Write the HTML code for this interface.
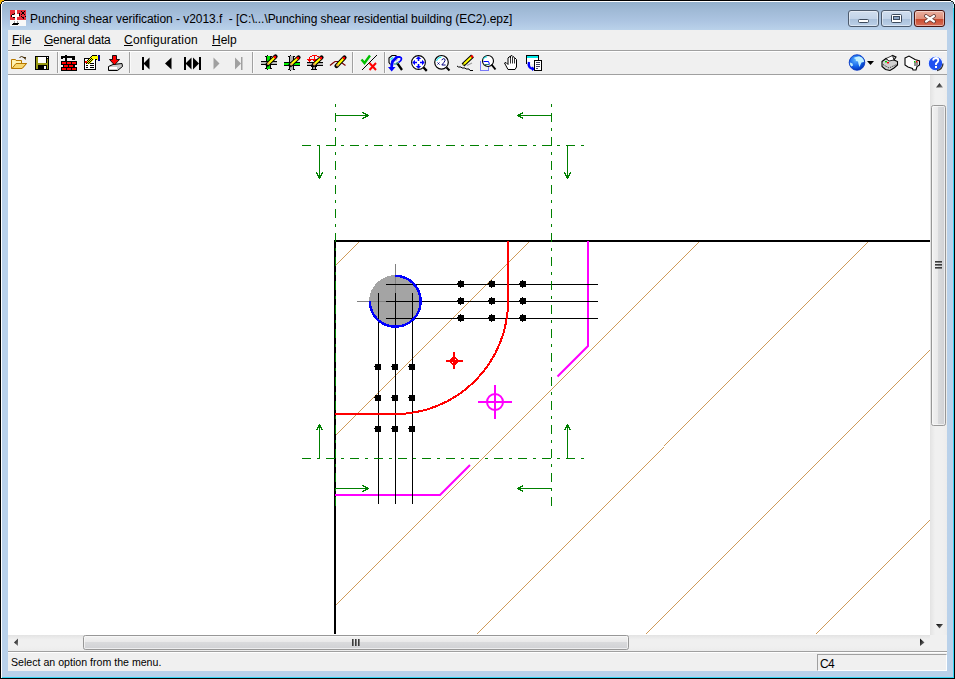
<!DOCTYPE html>
<html><head><meta charset="utf-8">
<style>
*{box-sizing:border-box}
html,body{margin:0;padding:0;width:955px;height:679px;overflow:hidden;background:#000;font-family:"Liberation Sans",sans-serif}
.a{position:absolute}
#win{position:absolute;left:0;top:0;width:955px;height:679px;background:#000}
#white{left:1px;top:1px;width:953px;height:677px;background:#fff}
#cyan{left:2px;top:2px;width:952px;height:676px;background:#33d4f4}
#frame{left:2px;top:2px;width:951px;height:675px;background:#b9d1ea}
#title{left:2px;top:2px;width:951px;height:28px;background:linear-gradient(#93b0cc,#a0bad6 30%,#adc5e2 70%,#bad2ea)}
#ttext{left:30px;top:10px;font-size:12px;color:#000;white-space:pre;letter-spacing:-0.05px;line-height:18px}
#client{left:8px;top:30px;width:939px;height:641px;background:#f0f0f0}
.menu{top:32px;font-size:12px;color:#000;white-space:pre;line-height:16px}
.menu u{text-decoration:underline;text-underline-offset:1px}
.hl{height:1px}
.btn{top:10px;height:17px;border:1px solid #4c5a6c;border-radius:3px;box-shadow:inset 0 0 0 1px rgba(255,255,255,0.45)}
.sep{width:1px;height:18px;top:54px;background:#a0a0a0}
</style></head><body>
<div id="win">
 <div id="white" class="a"></div>
 <div id="cyan" class="a"></div>
 <div id="frame" class="a"></div>
 <div id="title" class="a"></div>
 <div id="ttext" class="a">Punching shear verification - v2013.f  - [C:\...\Punching shear residential building (EC2).epz]</div>
 <!-- title buttons -->
 <div class="a btn" style="left:848px;width:31px;background:linear-gradient(#d0deee,#c3d4e8 50%,#a9c0da 52%,#bcd0e8)"></div>
 <div class="a btn" style="left:881px;width:31px;background:linear-gradient(#d0deee,#c3d4e8 50%,#a9c0da 52%,#bcd0e8)"></div>
 <div class="a btn" style="left:914px;width:31px;border-color:#4a1410;background:linear-gradient(#eab0a0,#e0907a 50%,#c8482c 52%,#d8705a)"></div>
<!--CORNERS-->
 <svg class="a" style="left:0;top:0" width="955" height="8" viewBox="0 0 955 8" shape-rendering="crispEdges">
  <rect x="0" y="0" width="4" height="1" fill="#f0b000"/><rect x="0" y="1" width="2" height="1" fill="#f0b000"/><rect x="0" y="2" width="1" height="2" fill="#f0b000"/>
  <rect x="2" y="1" width="2" height="1" fill="#202020"/><rect x="1" y="2" width="1" height="2" fill="#202020"/>
  <rect x="2" y="2" width="2" height="1" fill="#fff"/><rect x="2" y="3" width="1" height="1" fill="#fff"/>
  <rect x="951" y="0" width="4" height="1" fill="#fff"/><rect x="953" y="1" width="2" height="1" fill="#fff"/><rect x="954" y="2" width="1" height="2" fill="#fff"/>
  <rect x="951" y="1" width="2" height="1" fill="#203030"/><rect x="953" y="2" width="1" height="2" fill="#203030"/>
  <rect x="953" y="4" width="1" height="4" fill="#a0e8f8"/>
 </svg>
<!--/CORNERS-->
<!--TBTN-->
 <svg class="a" style="left:0;top:0" width="955" height="30" viewBox="0 0 955 30">
  <rect x="858.5" y="19.5" width="10" height="3" rx="1" fill="#fff" stroke="#3c4a5c" stroke-width="1"/>
  <rect x="891.5" y="14.5" width="10" height="8" rx="1" fill="#fff" stroke="#3c4a5c" stroke-width="1"/>
  <rect x="893.5" y="16.5" width="6" height="3" fill="#8aa4c4" stroke="#3c4a5c" stroke-width="1"/>
  <path d="M926 16 L934 21.5 M934 16 L926 21.5" stroke="#5a3430" stroke-width="3.8" stroke-linecap="round"/>
  <path d="M926 16 L934 21.5 M934 16 L926 21.5" stroke="#fff" stroke-width="2.2" stroke-linecap="round"/>
 </svg>
 <!-- app icon -->
 <svg class="a" style="left:10px;top:10px" width="16" height="16" viewBox="0 0 16 16" shape-rendering="crispEdges">
  <rect x="0" y="0" width="16" height="10" fill="#e8303c"/>
  <rect x="0" y="10" width="16" height="6" fill="#f8f8f8"/>
  <g fill="#000">
   <rect x="11" y="1" width="1" height="1"/><rect x="14" y="1" width="1" height="1"/><rect x="12" y="2" width="2" height="2"/>
   <rect x="11" y="4" width="1" height="1"/><rect x="14" y="4" width="1" height="1"/>
   <rect x="11" y="6" width="1" height="1"/><rect x="15" y="6" width="1" height="1"/><rect x="12" y="7" width="2" height="1"/><rect x="13" y="8" width="1" height="1"/>
   <rect x="1" y="5" width="1" height="2"/><rect x="2" y="4" width="2" height="1"/><rect x="4" y="3" width="1" height="1"/>
   <rect x="9" y="3" width="1" height="3"/><rect x="3" y="7" width="3" height="1"/><rect x="7" y="6" width="2" height="1"/>
   <rect x="3" y="13" width="5" height="2"/><rect x="2" y="14" width="2" height="1"/><rect x="8" y="13" width="1" height="1"/>
  </g>
  <g fill="#fff">
   <rect x="5" y="0" width="2" height="13"/><rect x="2" y="5" width="7" height="2"/><rect x="7" y="4" width="2" height="1"/>
  </g>
  <g fill="#a0a0a0"><rect x="4" y="11" width="1" height="2"/><rect x="7" y="11" width="1" height="2"/></g>
 </svg>
<!--/TBTN-->
 <div id="client" class="a"></div>
 <!-- menu -->
 <div class="a menu" style="left:12px"><u>F</u>ile</div>
 <div class="a menu" style="left:44px;letter-spacing:-0.25px"><u>G</u>eneral data</div>
 <div class="a menu" style="left:124px;letter-spacing:0.2px"><u>C</u>onfiguration</div>
 <div class="a menu" style="left:212px"><u>H</u>elp</div>
 <div class="a hl" style="left:8px;top:50px;width:939px;background:#a0a0a0"></div>
 <div class="a hl" style="left:8px;top:51px;width:939px;background:#fff"></div>
 <div class="a hl" style="left:8px;top:74px;width:939px;background:#a0a0a0"></div>
<!--TB-->
<svg class="a" style="left:8px;top:52px" width="939" height="22" viewBox="8 52 939 22">
<rect x="57" y="52" width="1" height="21" fill="#a0a0a0"/><rect x="58" y="52" width="1" height="21" fill="#fafafa"/>
<rect x="129" y="52" width="1" height="21" fill="#a0a0a0"/><rect x="130" y="52" width="1" height="21" fill="#fafafa"/>
<rect x="252" y="52" width="1" height="21" fill="#a0a0a0"/><rect x="253" y="52" width="1" height="21" fill="#fafafa"/>
<rect x="352" y="52" width="1" height="21" fill="#a0a0a0"/><rect x="353" y="52" width="1" height="21" fill="#fafafa"/>
<rect x="384" y="52" width="1" height="21" fill="#a0a0a0"/><rect x="385" y="52" width="1" height="21" fill="#fafafa"/>
<g>
<path d="M11.5 59.5 H15.5 L16 60.5 H21.5 V63.5 H26.5 L22 68.5 H11.5 Z" fill="#fff2b0" stroke="#b87800" stroke-width="1"/>
<path d="M16 63.5 H26.5 L22 68.5 H12 Z" fill="#f8d870" stroke="#b87800" stroke-width="1"/>
<path d="M19.5 57.5 Q21.5 55.5 24 57.5" fill="none" stroke="#402800" stroke-width="1"/><path d="M23 57 L26 57 L25.5 60 Z" fill="#402800"/>
</g>
<g shape-rendering="crispEdges"><rect x="35" y="56" width="14" height="14" fill="#000"/><rect x="36" y="57" width="2" height="12" fill="#9a9a14"/><rect x="47" y="59" width="1" height="10" fill="#9a9a14"/><rect x="36" y="63" width="12" height="2" fill="#9a9a14"/><rect x="38" y="57" width="8" height="6" fill="#fff"/><rect x="47" y="57" width="1" height="1" fill="#fff"/><rect x="38" y="65" width="9" height="4" fill="#000"/><rect x="44" y="66" width="2" height="3" fill="#fff"/></g>
<g shape-rendering="crispEdges"><rect x="61" y="56" width="14" height="2" fill="#000"/><rect x="61" y="58" width="2" height="1" fill="#000"/><rect x="65" y="55" width="2" height="6" fill="#000"/><rect x="72" y="58" width="3" height="2" fill="#000"/><rect x="73" y="57" width="1" height="2" fill="#000"/><rect x="61" y="61" width="16" height="4" fill="#000"/><rect x="63" y="64" width="12" height="4" fill="#000"/><rect x="61" y="67" width="16" height="4" fill="#000"/><rect x="62" y="62" width="4" height="2" fill="#ff0000"/><rect x="67" y="62" width="4" height="2" fill="#ff0000"/><rect x="72" y="62" width="4" height="2" fill="#ff0000"/><rect x="64" y="65" width="4" height="2" fill="#ff0000"/><rect x="69" y="65" width="4" height="2" fill="#ff0000"/><rect x="62" y="68" width="4" height="2" fill="#ff0000"/><rect x="67" y="68" width="4" height="2" fill="#ff0000"/><rect x="72" y="68" width="4" height="2" fill="#ff0000"/></g>
<g shape-rendering="crispEdges"><rect x="84" y="58" width="12" height="12" fill="#000"/><rect x="85" y="59" width="10" height="10" fill="#fff"/><rect x="86" y="63" width="2" height="1" fill="#000"/><rect x="86" y="65" width="2" height="1" fill="#000"/><rect x="86" y="67" width="2" height="1" fill="#000"/><rect x="90" y="63" width="4" height="1" fill="#000"/><rect x="90" y="65" width="4" height="1" fill="#000"/><rect x="90" y="67" width="4" height="1" fill="#000"/></g>
<g shape-rendering="crispEdges"><rect x="87" y="60" width="1" height="1" fill="#000"/><rect x="87" y="61" width="1" height="1" fill="#ffff00"/><rect x="87" y="62" width="1" height="1" fill="#000"/><rect x="87" y="63" width="1" height="1" fill="#ffff00"/><rect x="88" y="59" width="1" height="1" fill="#000"/><rect x="88" y="60" width="1" height="1" fill="#ffff00"/><rect x="88" y="61" width="1" height="1" fill="#000"/><rect x="88" y="62" width="1" height="1" fill="#ffff00"/><rect x="88" y="63" width="1" height="1" fill="#000"/><rect x="89" y="58" width="1" height="1" fill="#000"/><rect x="89" y="59" width="1" height="1" fill="#ffff00"/><rect x="89" y="60" width="1" height="1" fill="#000"/><rect x="89" y="61" width="1" height="1" fill="#ffff00"/><rect x="89" y="62" width="1" height="1" fill="#000"/><rect x="89" y="63" width="1" height="1" fill="#ffff00"/><rect x="90" y="57" width="1" height="1" fill="#000"/><rect x="90" y="58" width="1" height="1" fill="#ffff00"/><rect x="90" y="59" width="1" height="1" fill="#000"/><rect x="90" y="60" width="1" height="1" fill="#ffff00"/><rect x="90" y="61" width="1" height="1" fill="#000"/><rect x="90" y="62" width="1" height="1" fill="#ffff00"/><rect x="91" y="56" width="1" height="1" fill="#000"/><rect x="91" y="57" width="1" height="1" fill="#ffff00"/><rect x="91" y="58" width="1" height="1" fill="#000"/><rect x="91" y="59" width="1" height="1" fill="#ffff00"/><rect x="91" y="60" width="1" height="1" fill="#000"/><rect x="91" y="61" width="1" height="1" fill="#ffff00"/><rect x="92" y="56" width="1" height="1" fill="#ffff00"/><rect x="92" y="57" width="1" height="1" fill="#000"/><rect x="92" y="58" width="1" height="1" fill="#ffff00"/><rect x="92" y="59" width="1" height="1" fill="#000"/><rect x="92" y="60" width="1" height="1" fill="#ffff00"/><rect x="93" y="56" width="1" height="1" fill="#000"/><rect x="93" y="57" width="1" height="1" fill="#ffff00"/><rect x="93" y="58" width="1" height="1" fill="#000"/><rect x="93" y="59" width="1" height="1" fill="#ffff00"/><rect x="94" y="56" width="1" height="1" fill="#ffff00"/><rect x="94" y="57" width="1" height="1" fill="#000"/><rect x="94" y="58" width="1" height="1" fill="#ffff00"/><rect x="92" y="55" width="5" height="1" fill="#000"/><rect x="93" y="56" width="5" height="3" fill="#ffff00"/><rect x="92" y="57" width="1" height="1" fill="#ffff00"/><rect x="97" y="56" width="1" height="4" fill="#ffff00"/><rect x="95" y="59" width="2" height="1" fill="#000"/><rect x="98" y="55" width="2" height="6" fill="#000090"/><rect x="85" y="61" width="2" height="2" fill="#ff0000"/></g>
<path d="M108.5 66.5 L113 64.5 L122 63.5 L122.5 66.5 L117.5 70.5 H108.5 Z" fill="#c8c8c8" stroke="#000" stroke-width="1"/>
<rect x="109" y="67" width="8" height="2" fill="#fff"/>
<path d="M112.5 55.5 H116.5 V59.5 H119.5 L114.5 65 L109.5 59.5 H112.5 Z" fill="#ff0000" stroke="#000" stroke-width="0.9"/>
<g shape-rendering="crispEdges" fill="#000"><rect x="142" y="57" width="2" height="13" fill="#000"/></g>
<path d="M143.5 63.5 L149.5 57.5 V69.5 Z" fill="#000"/>
<path d="M165 63.5 L171.5 57.5 V69.5 Z" fill="#000"/>
<rect x="184" y="57" width="2" height="13" fill="#000"/><path d="M185.5 63.5 L191.5 57.5 V69.5 Z" fill="#000"/><path d="M199 63.5 L193 57.5 V69.5 Z" fill="#000"/><rect x="199" y="57" width="2" height="13" fill="#000"/>
<path d="M219.5 63.5 L213.5 57.5 V69.5 Z" fill="#a0a0a0"/>
<path d="M241 63.5 L235 57.5 V69.5 Z" fill="#a0a0a0"/><rect x="241" y="57" width="1.5" height="13" fill="#a0a0a0"/>
<g shape-rendering="crispEdges"><rect x="265" y="56" width="7" height="1" fill="#000"/><rect x="265" y="68" width="7" height="1" fill="#000"/><rect x="267" y="55" width="1" height="1" fill="#000"/><rect x="267" y="69" width="1" height="1" fill="#000"/><rect x="266" y="56" width="1" height="13" fill="#000"/><rect x="270" y="56" width="1" height="13" fill="#000"/><rect x="267" y="56" width="3" height="13" fill="#00e000"/><rect x="261" y="61" width="16" height="1" fill="#000"/><rect x="261" y="62" width="16" height="2" fill="#b8b8b8"/><rect x="261" y="64" width="16" height="1" fill="#000"/></g><line x1="267.5" y1="64.5" x2="275.5" y2="56.5" stroke="#000" stroke-width="4.2" stroke-linecap="round"/><line x1="268.5" y1="63.5" x2="274.5" y2="57.5" stroke="#ffff00" stroke-width="2.2"/><circle cx="274.9" cy="57.1" r="1.4" fill="#ff0000"/><circle cx="268.3" cy="63.7" r="1.2" fill="#f0b050"/>
<g shape-rendering="crispEdges"><rect x="288" y="56" width="7" height="1" fill="#000"/><rect x="288" y="69" width="7" height="1" fill="#000"/><rect x="290" y="55" width="1" height="1" fill="#000"/><rect x="290" y="70" width="1" height="1" fill="#000"/><rect x="289" y="56" width="1" height="14" fill="#000"/><rect x="293" y="56" width="1" height="14" fill="#000"/><rect x="290" y="56" width="3" height="14" fill="#b0b0b0"/><rect x="284" y="62" width="16" height="1" fill="#000"/><rect x="284" y="63" width="16" height="2" fill="#00f000"/><rect x="284" y="65" width="16" height="1" fill="#000"/></g><line x1="290.5" y1="65" x2="298.5" y2="57.5" stroke="#000" stroke-width="4.2" stroke-linecap="round"/><line x1="291.5" y1="64" x2="297.5" y2="58.5" stroke="#ffff00" stroke-width="2.2"/><circle cx="297.9" cy="58.1" r="1.4" fill="#ff0000"/><circle cx="291.3" cy="64.2" r="1.2" fill="#f0b050"/>
<g shape-rendering="crispEdges"><rect x="312" y="55" width="5" height="1" fill="#ff0000"/><rect x="310" y="56" width="2" height="1" fill="#ff0000"/><rect x="317" y="56" width="2" height="1" fill="#ff0000"/><rect x="314" y="56" width="1" height="6" fill="#ff0000"/><rect x="309" y="57" width="1" height="2" fill="#ff0000"/><rect x="307" y="59" width="10" height="1" fill="#ff0000"/><rect x="308" y="60" width="3" height="1" fill="#ff0000"/><rect x="313" y="60" width="3" height="1" fill="#ff0000"/><rect x="309" y="61" width="1" height="1" fill="#ff0000"/></g>
<g shape-rendering="crispEdges"><rect x="307" y="62" width="16" height="1" fill="#000"/><rect x="307" y="63" width="16" height="2" fill="#b8b8b8"/><rect x="307" y="65" width="16" height="1" fill="#000"/><rect x="311" y="66" width="6" height="1" fill="#000"/><rect x="312" y="66" width="1" height="4" fill="#000"/><rect x="315" y="66" width="1" height="4" fill="#000"/><rect x="313" y="66" width="2" height="4" fill="#a0a0a0"/><rect x="311" y="69" width="6" height="1" fill="#000"/></g><line x1="313.5" y1="65" x2="321.5" y2="57.5" stroke="#000" stroke-width="4.2" stroke-linecap="round"/><line x1="314.5" y1="64" x2="320.5" y2="58.5" stroke="#ffff00" stroke-width="2.2"/><circle cx="320.9" cy="58.1" r="1.4" fill="#ff0000"/><circle cx="314.3" cy="64.2" r="1.2" fill="#f0b050"/>
<path d="M330 65.5 L333 63 L335 61.5 H338 M342 63 L345.5 65.5" fill="none" stroke="#800000" stroke-width="1.2"/><line x1="336.5" y1="66" x2="344.5" y2="57.5" stroke="#000" stroke-width="4.2" stroke-linecap="round"/><line x1="337.5" y1="65" x2="343.5" y2="58.5" stroke="#ffff00" stroke-width="2.2"/><circle cx="343.9" cy="58.1" r="1.4" fill="#ff0000"/><circle cx="337.3" cy="65.2" r="1.2" fill="#f0b050"/>
<line x1="361.5" y1="70.5" x2="376.5" y2="55.5" stroke="#000" stroke-width="1" shape-rendering="crispEdges"/>
<path d="M361.5 59.5 L364.5 63 L370 55.5" fill="none" stroke="#00c000" stroke-width="2.4"/>
<path d="M369.5 63 L376 70 M376 63 L369.5 70" stroke="#ff0000" stroke-width="2"/>
<path d="M396.5 55.5 H392 L389 58 V62.5 L390.5 64.5" fill="none" stroke="#000" stroke-width="1.1"/>
<path d="M390.5 59.5 L393 57.5" stroke="#00e8e8" stroke-width="1.2"/>
<path d="M394 64 H396.5 L397.5 62" fill="none" stroke="#008080" stroke-width="1.2"/>
<line x1="397.5" y1="63.5" x2="402" y2="70" stroke="#000" stroke-width="2.2"/>
<path d="M395.5 57 H400 Q401.5 57.5 401.5 59 Q401.3 61 398.5 62.5" fill="none" stroke="#0000ff" stroke-width="1.8"/>
<path d="M397 57 L392.5 61.5 L391.5 67" fill="none" stroke="#0000ff" stroke-width="2.8"/>
<path d="M388 67 H395.5 L391.7 71.5 Z" fill="#0000ff"/>
<path d="M397.5 58.5 L396 61" stroke="#a0a0a0" stroke-width="0.8"/>
<circle cx="418.5" cy="62.5" r="6.9" fill="#fff" stroke="#000" stroke-width="1.1"/><line x1="423.5" y1="67.5" x2="426.8" y2="70.8" stroke="#000" stroke-width="2.4"/>
<path d="M418.5 56.3 L421.2 59 H415.8 Z M418.5 68.7 L421.2 66 H415.8 Z M412.3 62.5 L415 59.8 V65.2 Z M424.7 62.5 L422 59.8 V65.2 Z" fill="#0000ff"/>
<path d="M418.5 58.5 V61 M418.5 64 V66.5 M414.5 62.5 H417 M420 62.5 H422.5" stroke="#0000ff" stroke-width="1.6"/>
<circle cx="441.5" cy="62.3" r="6.8" fill="#fff" stroke="#000" stroke-width="1.2"/><line x1="446.5" y1="67.5" x2="449.5" y2="70.5" stroke="#000" stroke-width="2"/>
<path d="M436.5 61 Q437 57.5 441.5 57" fill="none" stroke="#00e8f0" stroke-width="1"/>
<path d="M437.5 62.5 L439.5 64.5 M439.5 62.5 L437.5 64.5" stroke="#000080" stroke-width="0.9"/><path d="M441.8 60.2 Q442.5 58.6 443.8 58.6 Q445.3 58.8 445 60.6 Q444.5 62 441.8 65 H445.6" fill="none" stroke="#000080" stroke-width="1"/>
<path d="M457 66 L458.5 67 H461 L462 68 H465 L466 69 H469 L470 70.5 H473" fill="none" stroke="#000" stroke-width="1"/>
<line x1="467" y1="65.5" x2="472" y2="63" stroke="#a0a0a0" stroke-width="1.2"/>
<line x1="463" y1="65" x2="472.5" y2="56" stroke="#000" stroke-width="4"/><line x1="464" y1="64" x2="471.5" y2="57" stroke="#ffff00" stroke-width="2"/><circle cx="472" cy="56.5" r="1.3" fill="#ff0000"/><circle cx="463.5" cy="64.5" r="1.1" fill="#9a9a10"/>
<path d="M480.5 61.5 V70.5 H488.5 V65" fill="none" stroke="#0000ff" stroke-width="1" stroke-dasharray="1 1"/>
<circle cx="488" cy="61" r="5.5" fill="#fff" stroke="#000" stroke-width="1.1"/><line x1="491.5" y1="64.5" x2="495.5" y2="69.5" stroke="#000" stroke-width="2"/>
<path d="M483.5 61.5 H488.5 L489.5 64.5" fill="none" stroke="#0000ff" stroke-width="1"/><path d="M483.5 59 Q484 57 487 56.8" fill="none" stroke="#00e8f0" stroke-width="1"/><path d="M485 64.5 H489" stroke="#208080" stroke-width="1"/>
<path d="M508 69.5 L504.5 63 L506 62.5 L508 64.5 V58 L509.5 56.5 L510.5 58 V56 L512 55.5 L513 56.5 L514.5 57.5 L516.5 59.5 V67 L515 69.5 Z" fill="#fff" stroke="#000" stroke-width="1"/>
<path d="M510.5 58 V63.5 M512.5 56.5 V63.5 M514.5 58 V63.5" stroke="#000" stroke-width="0.8"/>
<rect x="526" y="55" width="13" height="9" fill="#000"/><rect x="527" y="56" width="11" height="2" fill="#00e8e8"/><rect x="527" y="58" width="11" height="6" fill="#fff"/>
<path d="M529 62 Q527.5 68 533 69" fill="none" stroke="#0000ff" stroke-width="2.4"/><path d="M532 66.5 L535.5 69 L532 71 Z" fill="#0000ff"/>
<rect x="534" y="60" width="8" height="11" fill="#000"/><rect x="535" y="61" width="6" height="9" fill="#fff"/><rect x="536" y="62" width="4" height="1" fill="#404060"/><rect x="536" y="64" width="4" height="1" fill="#404060"/><rect x="536" y="66" width="4" height="1" fill="#404060"/><rect x="536" y="68" width="2" height="1" fill="#404060"/>
<defs><radialGradient id="gl" cx="0.4" cy="0.35" r="0.7"><stop offset="0" stop-color="#58b0ff"/><stop offset="0.6" stop-color="#1060e8"/><stop offset="1" stop-color="#0030b0"/></radialGradient></defs>
<circle cx="857" cy="62.5" r="7.8" fill="url(#gl)" stroke="#0030c0" stroke-width="0.8"/>
<path d="M853.5 58 L856 57 L859 56.3 L862 57.5 L863.8 60 L864 62 L861.5 62.5 L860.5 64.5 L859.5 67 L858.5 64 L858 61.5 L856 61 L855.5 59 Z M850 62.5 L852.5 63.5 L853 65.5 L851.5 66.5 L850.2 65 Z" fill="#c0f0ff"/>
<path d="M867 61 H874 L870.5 65 Z" fill="#000"/>
<path d="M882 61.5 L886 58.5 L889 60 L892.5 55.5 L896 57 L894 60 L897.5 61.5 V65 L894 68 L890 70.5 L885.5 69.5 L882 66.5 Z" fill="#d0d0d0" stroke="#000" stroke-width="1.1"/>
<path d="M886 58.5 L889 61 L894 60 L892.5 55.5 Z" fill="#fff" stroke="#000" stroke-width="0.8"/><rect x="885" y="61" width="2" height="1.4" fill="#00d000"/><rect x="887" y="62" width="2" height="1.4" fill="#ff0000"/>
<path d="M883 64.5 L889 68 L896.5 64.5" fill="none" stroke="#000" stroke-width="0.8" stroke-dasharray="1 1"/>
<path d="M905 58 L909 56 L915 59.5 L919.5 61 V65 L917 66.5 L916 70 L913 70 L912.5 68.5 L908 67 L905 65 Z" fill="#fff" stroke="#000" stroke-width="1.1"/>
<rect x="914" y="62" width="4" height="4" fill="#909090"/><rect x="914" y="61" width="1.5" height="1.4" fill="#00c000"/><rect x="916" y="61" width="1.5" height="1.4" fill="#ff0000"/>
<circle cx="935.5" cy="63.5" r="7.3" fill="#2050f0" stroke="#e8f0ff" stroke-width="1.2"/><path d="M937 70.5 Q942.5 69.5 943 63.5" fill="none" stroke="#303030" stroke-width="1.3"/>
<path d="M933 60.5 Q933.5 58 936 58 Q938.5 58.3 938.3 60.5 Q938 62 936 63.5 V65" fill="none" stroke="#fff" stroke-width="1.8"/><rect x="935" y="66" width="2" height="2" fill="#fff"/>
</svg>
<!--/TB-->
 <!-- canvas -->
 <div id="canvas" class="a" style="left:8px;top:75px;width:922px;height:560px;background:#fff"></div>
<!--SVG-->
<svg class="a" style="left:8px;top:75px" width="922" height="560" viewBox="8 75 922 560">
<defs><clipPath id="slab"><rect x="336" y="242" width="594" height="392"/></clipPath><clipPath id="slabU"><rect x="336" y="242" width="594" height="204"/></clipPath><clipPath id="slabL"><rect x="336" y="447" width="594" height="187"/></clipPath></defs>
<g stroke="#cf9a58" stroke-width="1" shape-rendering="crispEdges"><g clip-path="url(#slab)"><line x1="326" y1="274.8" x2="368.8" y2="232"/><line x1="326" y1="444.8" x2="538.8" y2="232"/><line x1="326" y1="614.8" x2="708.8" y2="232"/><line x1="326" y1="953.8" x2="1047.8" y2="232"/><line x1="326" y1="1123.8" x2="1217.8" y2="232"/></g><g clip-path="url(#slabU)"><line x1="326" y1="783.8" x2="877.8" y2="232"/></g><g clip-path="url(#slabL)"><line x1="326" y1="784.8" x2="878.8" y2="232"/></g></g>
<rect x="334" y="240" width="596" height="2" fill="#000"/>
<rect x="334" y="240" width="2" height="394" fill="#000"/>
<g fill="none" stroke="#ff00ff" stroke-width="2" stroke-linejoin="miter">
<path d="M588 241 L588 346 L557.5 376.5"/>
<path d="M335 495 L440 495 L470 465"/>
</g>
<circle cx="395.3" cy="301.3" r="26.2" fill="#a4a4a4" shape-rendering="crispEdges"/>
<g stroke="#808080" stroke-width="1"><line x1="395.5" y1="264" x2="395.5" y2="339"/><line x1="357" y1="301.5" x2="434" y2="301.5"/></g>
<g stroke="#000" stroke-width="1"><line x1="386" y1="284.5" x2="598" y2="284.5"/><line x1="386" y1="301.5" x2="598" y2="301.5"/><line x1="386" y1="318.5" x2="598" y2="318.5"/><line x1="378.5" y1="293" x2="378.5" y2="504"/><line x1="395.5" y1="293" x2="395.5" y2="504"/><line x1="412.5" y1="293" x2="412.5" y2="504"/></g>
<g fill="#000" shape-rendering="crispEdges"><rect x="458" y="281" width="6" height="6"/><rect x="460" y="280" width="1" height="8"/><rect x="457" y="283" width="1" height="1"/><rect x="489" y="281" width="6" height="6"/><rect x="491" y="280" width="1" height="8"/><rect x="488" y="283" width="1" height="1"/><rect x="520" y="281" width="6" height="6"/><rect x="522" y="280" width="1" height="8"/><rect x="519" y="283" width="1" height="1"/><rect x="458" y="298" width="6" height="6"/><rect x="460" y="297" width="1" height="8"/><rect x="457" y="300" width="1" height="1"/><rect x="489" y="298" width="6" height="6"/><rect x="491" y="297" width="1" height="8"/><rect x="488" y="300" width="1" height="1"/><rect x="520" y="298" width="6" height="6"/><rect x="522" y="297" width="1" height="8"/><rect x="519" y="300" width="1" height="1"/><rect x="458" y="315" width="6" height="6"/><rect x="460" y="314" width="1" height="8"/><rect x="457" y="317" width="1" height="1"/><rect x="489" y="315" width="6" height="6"/><rect x="491" y="314" width="1" height="8"/><rect x="488" y="317" width="1" height="1"/><rect x="520" y="315" width="6" height="6"/><rect x="522" y="314" width="1" height="8"/><rect x="519" y="317" width="1" height="1"/><rect x="375" y="364" width="6" height="6"/><rect x="374" y="366" width="1" height="1"/><rect x="378" y="363" width="1" height="8"/><rect x="392" y="364" width="6" height="6"/><rect x="391" y="366" width="1" height="1"/><rect x="395" y="363" width="1" height="8"/><rect x="409" y="364" width="6" height="6"/><rect x="408" y="366" width="1" height="1"/><rect x="412" y="363" width="1" height="8"/><rect x="375" y="395" width="6" height="6"/><rect x="374" y="397" width="1" height="1"/><rect x="378" y="394" width="1" height="8"/><rect x="392" y="395" width="6" height="6"/><rect x="391" y="397" width="1" height="1"/><rect x="395" y="394" width="1" height="8"/><rect x="409" y="395" width="6" height="6"/><rect x="408" y="397" width="1" height="1"/><rect x="412" y="394" width="1" height="8"/><rect x="375" y="426" width="6" height="6"/><rect x="374" y="428" width="1" height="1"/><rect x="378" y="425" width="1" height="8"/><rect x="392" y="426" width="6" height="6"/><rect x="391" y="428" width="1" height="1"/><rect x="395" y="425" width="1" height="8"/><rect x="409" y="426" width="6" height="6"/><rect x="408" y="428" width="1" height="1"/><rect x="412" y="425" width="1" height="8"/></g>
<path d="M395.3 275.90000000000003 A25.4 25.4 0 1 1 369.90000000000003 301.3" fill="none" stroke="#0000ff" stroke-width="2.4" shape-rendering="crispEdges"/>
<path d="M508 241 L508 301.3 A112.7 112.7 0 0 1 395.3 414 L335 414" fill="none" stroke="#ff0000" stroke-width="2" shape-rendering="crispEdges"/>
<g stroke="#008000" stroke-width="1" shape-rendering="crispEdges">
<line x1="335.5" y1="104" x2="335.5" y2="506" stroke-dasharray="3 6 9 6"/>
<line x1="551.5" y1="104" x2="551.5" y2="506" stroke-dasharray="3 6 9 6"/>
<line x1="302" y1="145.5" x2="584" y2="145.5" stroke-dasharray="9 6 3 6"/>
<line x1="302" y1="458.5" x2="584" y2="458.5" stroke-dasharray="9 6 3 6"/>
</g>
<g stroke="#008000" stroke-width="1" fill="none" shape-rendering="crispEdges"><line x1="335.5" y1="115.5" x2="368.5" y2="115.5"/><line x1="362.5" y1="112.5" x2="368.5" y2="115.5"/><line x1="362.5" y1="118.5" x2="368.5" y2="115.5"/><line x1="551.5" y1="115.5" x2="517.5" y2="115.5"/><line x1="523.5" y1="112.5" x2="517.5" y2="115.5"/><line x1="523.5" y1="118.5" x2="517.5" y2="115.5"/><line x1="319.5" y1="145.5" x2="319.5" y2="178.5"/><line x1="316.5" y1="172.5" x2="319.5" y2="178.5"/><line x1="322.5" y1="172.5" x2="319.5" y2="178.5"/><line x1="567.5" y1="145.5" x2="567.5" y2="178.5"/><line x1="564.5" y1="172.5" x2="567.5" y2="178.5"/><line x1="570.5" y1="172.5" x2="567.5" y2="178.5"/><line x1="319.5" y1="458.5" x2="319.5" y2="424.5"/><line x1="316.5" y1="430.5" x2="319.5" y2="424.5"/><line x1="322.5" y1="430.5" x2="319.5" y2="424.5"/><line x1="567.5" y1="458.5" x2="567.5" y2="424.5"/><line x1="564.5" y1="430.5" x2="567.5" y2="424.5"/><line x1="570.5" y1="430.5" x2="567.5" y2="424.5"/><line x1="335.5" y1="488.5" x2="368.5" y2="488.5"/><line x1="362.5" y1="485.5" x2="368.5" y2="488.5"/><line x1="362.5" y1="491.5" x2="368.5" y2="488.5"/><line x1="551.5" y1="488.5" x2="517.5" y2="488.5"/><line x1="523.5" y1="485.5" x2="517.5" y2="488.5"/><line x1="523.5" y1="491.5" x2="517.5" y2="488.5"/></g>
<g fill="#ff0000"><rect x="453" y="352" width="2" height="17"/><rect x="446" y="360" width="17" height="2"/></g><circle cx="454" cy="361" r="3" fill="none" stroke="#ff0000" stroke-width="2" shape-rendering="crispEdges"/>
<g fill="#ff00ff"><rect x="494" y="385" width="2" height="34"/><rect x="478" y="401" width="34" height="2"/></g><circle cx="495" cy="402" r="8" fill="none" stroke="#ff00ff" stroke-width="2"/>
</svg>
<!--/SVG-->
<!--SB-->
 <!-- vertical scrollbar -->
 <div class="a" style="left:930px;top:75px;width:17px;height:560px;background:linear-gradient(90deg,#e3e3e3,#f0f0f0 30%,#f0f0f0 70%,#ececec)"></div>
 <svg class="a" style="left:930px;top:75px" width="17" height="560">
  <defs>
   <linearGradient id="tv" x1="0" x2="1" y1="0" y2="0"><stop offset="0" stop-color="#f3f3f3"/><stop offset="0.45" stop-color="#e9e9ea"/><stop offset="0.5" stop-color="#d9dadc"/><stop offset="1" stop-color="#cfd0d4"/></linearGradient>
   <linearGradient id="th" x1="0" x2="0" y1="0" y2="1"><stop offset="0" stop-color="#f3f3f3"/><stop offset="0.45" stop-color="#e9e9ea"/><stop offset="0.5" stop-color="#d9dadc"/><stop offset="1" stop-color="#cfd0d4"/></linearGradient>
   <linearGradient id="ag" x1="0" x2="1" y1="0" y2="1"><stop offset="0" stop-color="#000"/><stop offset="1" stop-color="#888"/></linearGradient>
  </defs>
  <path d="M6 12.5 L9.5 8 L13 12.5 Z" fill="url(#ag)"/>
  <rect x="1.5" y="30.5" width="14" height="320" rx="2" fill="url(#tv)" stroke="#979797"/>
  <rect x="2.5" y="31.5" width="12" height="318" rx="1" fill="none" stroke="#fafafa" stroke-opacity="0.7"/>
  <g fill="#3c3c3c"><rect x="5" y="186" width="7" height="1.6"/><rect x="5" y="189" width="7" height="1.6"/><rect x="5" y="192" width="7" height="1.6"/></g>
  <path d="M6 549 L13 549 L9.5 553.5 Z" fill="url(#ag)"/>
 </svg>
 <!-- horizontal scrollbar -->
 <div class="a" style="left:8px;top:635px;width:939px;height:16px;background:linear-gradient(#e3e3e3,#f0f0f0 30%,#f0f0f0 70%,#ececec)"></div>
 <div class="a" style="left:930px;top:635px;width:17px;height:16px;background:#f0f0f0"></div>
 <svg class="a" style="left:8px;top:635px" width="922" height="16">
  <path d="M6 7.5 L10 3.5 L10 11 Z" fill="url(#ag)"/>
  <rect x="75.5" y="0.5" width="545" height="14" rx="2" fill="url(#th)" stroke="#979797"/>
  <rect x="76.5" y="1.5" width="543" height="12" rx="1" fill="none" stroke="#fafafa" stroke-opacity="0.7"/>
  <g fill="#3c3c3c"><rect x="344" y="4" width="1.6" height="7"/><rect x="347" y="4" width="1.6" height="7"/><rect x="350" y="4" width="1.6" height="7"/></g>
  <path d="M912 3.5 L916.5 7.5 L912 11 Z" fill="url(#ag)"/>
 </svg>
 <!-- status bar -->
 <div class="a hl" style="left:8px;top:651px;width:939px;background:#a0a0a0"></div>
 <div class="a hl" style="left:8px;top:652px;width:939px;background:#fff"></div>
 <div class="a" style="left:11px;top:655px;font-size:11.6px;line-height:14px;white-space:pre;color:#000;transform:scaleX(0.915);transform-origin:0 0">Select an option from the menu.</div>
 <div class="a" style="left:817px;top:654px;width:130px;height:17px;border-left:1px solid #a0a0a0;border-top:1px solid #a0a0a0;border-right:1px solid #fff;border-bottom:1px solid #fff"></div>
 <div class="a" style="left:820px;top:656.5px;font-size:12px;line-height:14px;white-space:pre;color:#000;letter-spacing:-0.6px">C4</div>
<!--/SB-->
</div>
</body></html>
